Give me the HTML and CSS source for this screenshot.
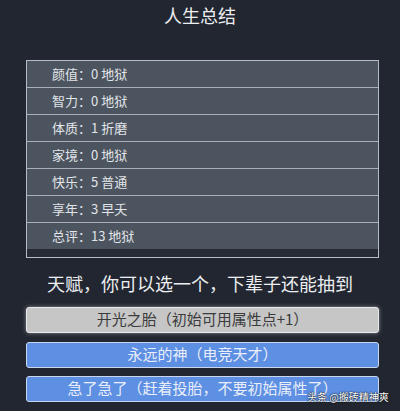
FILE: index.html
```html
<!DOCTYPE html>
<html lang="zh-CN">
<head>
<meta charset="utf-8">
<title>人生总结</title>
<link rel="stylesheet" href="styles.css">
</head>
<body>
<div class="page">
  <h1 class="title">人生总结</h1>
  <div class="panel">
    <div class="row">颜值：0 地狱</div>
    <div class="row">智力：0 地狱</div>
    <div class="row">体质：1 折磨</div>
    <div class="row">家境：0 地狱</div>
    <div class="row">快乐：5 普通</div>
    <div class="row">享年：3 早夭</div>
    <div class="row last">总评：13 地狱</div>
  </div>
  <h2 class="subtitle">天赋，你可以选一个，下辈子还能抽到</h2>
  <div class="choices">
    <div class="btn gray">开光之胎（初始可用属性点+1）</div>
    <div class="btn blue">永远的神（电竞天才）</div>
    <div class="btn blue">急了急了（赶着投胎，不要初始属性了）</div>
  </div>
  <div class="watermark">头条 @搬砖精神爽</div>
</div>
</body>
</html>
```
FILE: styles.css
```css
html, body {
  margin: 0;
  padding: 0;
  background: #222630;
}
.page {
  position: relative;
  width: 400px;
  height: 411px;
  overflow: hidden;
  font-family: "Noto Sans CJK SC", "Noto Sans", sans-serif;
  color: #e6e8ec;
}
.title {
  margin: 0 0 30px 0;
  font-size: 18px;
  font-weight: 400;
  line-height: 30px;
  text-align: center;
  color: #eceef1;
}
.panel {
  margin: 0 21px 0 26px;
  border: 1px solid #b7bdc6;
  background: #262b35;
  padding-bottom: 8px;
}
.row {
  height: 26px;
  line-height: 26px;
  padding-left: 25px;
  font-size: 13px;
  color: #e2e5e9;
  background: #4c545f;
  border-bottom: 1px solid #a9b0b9;
}
.row.last {
  border-bottom: none;
}
.subtitle {
  margin: 13px 0 12px 0;
  font-size: 18px;
  font-weight: 400;
  line-height: 24px;
  text-align: center;
  color: #eceef1;
}
.choices {
  display: flex;
  flex-direction: column;
  gap: 8px;
  margin: 0 21px 0 26px;
}
.btn {
  box-sizing: border-box;
  height: 26px;
  line-height: 22px;
  text-align: center;
  font-size: 15px;
  border: 1.5px solid #e6e9ee;
  border-radius: 3px;
}
.btn.gray {
  background: #c6c6c6;
  color: #3b3b3b;
  box-shadow: 0 0 4px rgba(255, 255, 255, 0.45);
  margin-bottom: 1px;
}
.btn.blue {
  background: #5d8fe3;
  color: #e9eefa;
  border-color: #c9d6ee;
}
.watermark {
  position: absolute;
  left: 307px;
  top: 390px;
  white-space: nowrap;
  font-size: 10px;
  line-height: 14px;
  color: #ffffff;
  text-shadow: 0 0 2px rgba(0, 0, 0, 0.9), 0 0 1px #000;
}
```
